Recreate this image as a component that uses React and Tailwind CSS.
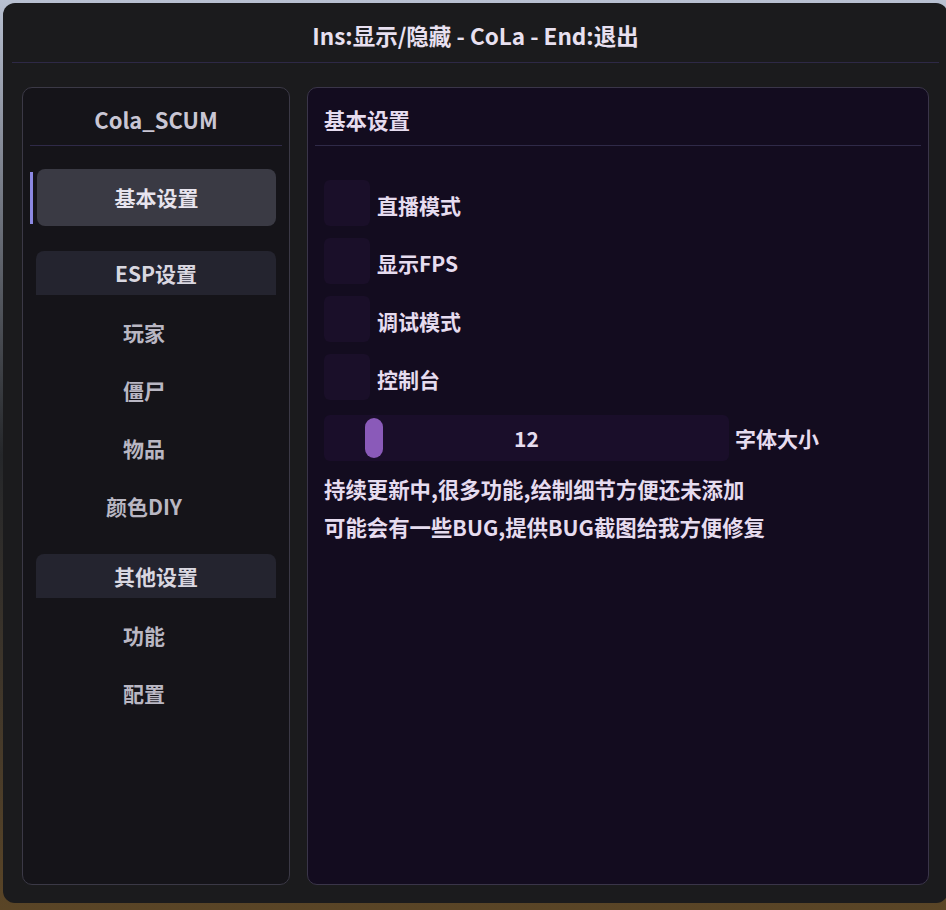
import React from "react";

const font = { fontFamily: '"Noto Sans CJK SC", "Noto Sans", sans-serif' };

function Check({ label }) {
  return (
    <div className="flex items-center h-[46px] gap-[7px]">
      <div className="w-[46px] h-[46px] rounded-[6px] bg-[#1a0f29]" />
      <span className="text-[21px] font-bold text-[#e6dcef] leading-none pt-[4px]">{label}</span>
    </div>
  );
}

function SubItem({ label }) {
  return (
    <div className="h-[58px] flex items-center justify-center pr-[24px] pb-[1px] text-[21px] font-bold text-[#b9b7c3] leading-none">
      {label}
    </div>
  );
}

function Header({ label }) {
  return (
    <div className="mx-[13px] h-[44px] rounded-t-[8px] bg-[#24242f] flex items-center justify-center text-[21px] font-bold text-[#d9d7e0] leading-none">
      {label}
    </div>
  );
}

export default function App() {
  return (
    <div
      className="w-[946px] h-[910px] overflow-hidden pt-[3px] pl-[3px] bg-gradient-to-b from-[#b9c1d2] via-[#25272a] to-[#5a4526]"
      style={font}
    >
      <div className="w-[945px] h-[900px] rounded-[12px] bg-[#1b1b1d] flex flex-col">
        <div className="h-[59px] flex items-center justify-center pt-[6px] text-[22.5px] font-bold text-[#e8e0f0] leading-none">
          Ins:显示/隐藏 - CoLa - End:退出
        </div>
        <div className="mx-[9px] h-px bg-[#2e2946]" />
        <div className="flex-1 flex gap-[17px] px-[19px] pt-[24px] pb-[18px]">
          {/* left panel */}
          <div className="w-[268px] rounded-[10px] border border-[#3b3946] bg-[#151419] flex flex-col">
            <div className="h-[57px] flex items-center justify-center pt-[5px] text-[22px] font-bold text-[#c9c6d4] leading-none">
              Cola_SCUM
            </div>
            <div className="mx-[7px] h-px bg-[#2f2a48]" />
            <div className="mt-[23px] flex items-center pl-[7px] pr-[13px] gap-[4px]">
              <div className="w-[3px] h-[52px] bg-[#8c88e2]" />
              <div className="flex-1 h-[57px] rounded-[8px] bg-[#3a3a44] flex items-center justify-center text-[21px] font-bold text-[#e7e4ee] leading-none">
                基本设置
              </div>
            </div>
            <div className="mt-[25px]">
              <Header label="ESP设置" />
            </div>
            <div className="mt-[9px]">
              <SubItem label="玩家" />
              <SubItem label="僵尸" />
              <SubItem label="物品" />
              <SubItem label="颜色DIY" />
            </div>
            <div className="mt-[18px]">
              <Header label="其他设置" />
            </div>
            <div className="mt-[9px]">
              <SubItem label="功能" />
              <SubItem label="配置" />
            </div>
          </div>
          {/* right panel */}
          <div className="flex-1 rounded-[10px] border border-[#3a3549] bg-[#130c1f] flex flex-col">
            <div className="h-[57px] flex items-center px-[16px] pt-[7px] text-[21.5px] font-bold text-[#e6dcef] leading-none">
              基本设置
            </div>
            <div className="mx-[7px] h-px bg-[#2f2a48]" />
            <div className="px-[16px] pt-[34px] flex flex-col gap-[12px]">
              <Check label="直播模式" />
              <Check label="显示FPS" />
              <Check label="调试模式" />
              <Check label="控制台" />
              <div className="flex items-center gap-[6px] mt-[3px]">
                <div className="relative w-[405px] h-[46px] rounded-[6px] bg-[#1a0e2a] flex items-center justify-center text-[21px] font-bold text-[#e6dcef] leading-none">
                  <div className="absolute left-[41px] top-[3px] w-[18px] h-[40px] rounded-full bg-[#8a5ab9]" />
                  12
                </div>
                <span className="text-[21px] font-bold text-[#e6dcef] leading-none">字体大小</span>
              </div>
            </div>
            <div className="px-[16px] pt-[9px] text-[21.4px] font-bold text-[#e6dcef] leading-[38px]">
              <div>持续更新中,很多功能,绘制细节方便还未添加</div>
              <div>可能会有一些BUG,提供BUG截图给我方便修复</div>
            </div>
          </div>
        </div>
      </div>
    </div>
  );
}
